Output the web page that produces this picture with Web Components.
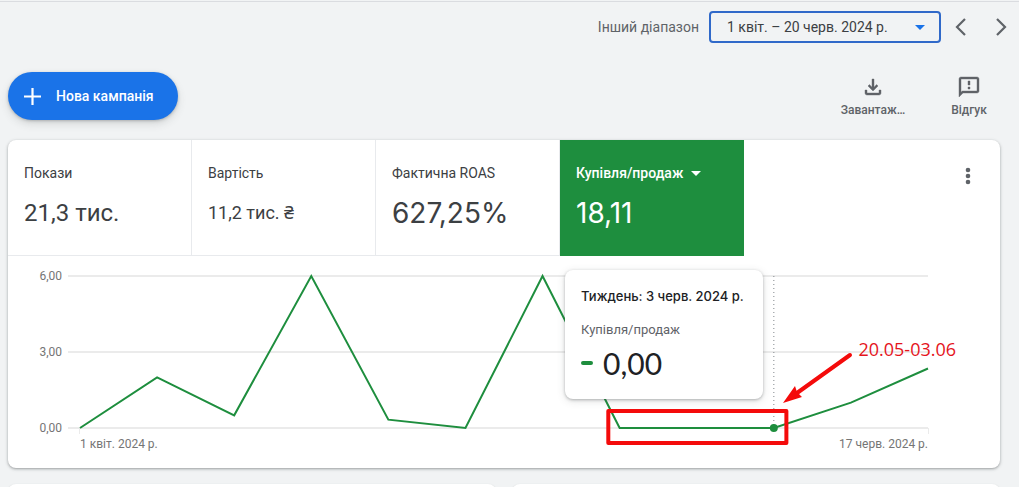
<!DOCTYPE html>
<html lang="uk">
<head>
<meta charset="utf-8">
<meta name="viewport" content="width=device-width, initial-scale=1">
<title>Огляд кампаній</title>
<style>
html{height:100%;overflow:hidden}
body{margin:0;height:100%;overflow:hidden;background:#f1f3f4;color:#3c4043;font-family:Roboto,"Noto Sans",sans-serif;font-size:14px}
</style>
</head>
<body>
<ads-overview></ads-overview>
<script>
function define(name, html, setup) {
  const template = document.createElement('template');
  template.innerHTML = html;
  customElements.define(name, class extends HTMLElement {
    constructor() {
      super();
      this.attachShadow({mode: 'open'}).append(template.content.cloneNode(true));
    }
    connectedCallback() {
      if (setup) setup(this, this.shadowRoot);
    }
  });
}

/* Date range picker with previous / next arrows */
define('date-range', `
<style>
:host{display:flex;align-items:center;justify-content:flex-end;height:32px;margin-right:-2px}
.name{color:#5f6368;line-height:20px;margin-right:10px}
button{font:inherit;color:inherit;cursor:pointer;background:none;border:0;padding:0}
.range{box-sizing:border-box;display:flex;align-items:center;justify-content:space-between;width:232px;height:32px;padding:0 14px 0 16px;border:2px solid #3069c9;border-radius:4px}
.step{display:flex;align-items:center;justify-content:center;width:40px;height:32px;color:#5f6368}
svg{display:block}
</style>
<span class="name" id="name">Інший діапазон</span>
<button class="range" aria-describedby="name"><slot></slot><svg width="10" height="5"><path d="M0 0h10L5 5z" fill="#1a73e8"/></svg></button>
<button class="step" aria-label="Попередній період"><svg width="12" height="18" fill="none" stroke="currentColor" stroke-width="2.2"><path d="M10 1 2 9l8 8"/></svg></button>
<button class="step" aria-label="Наступний період"><svg width="12" height="18" fill="none" stroke="currentColor" stroke-width="2.2"><path d="m2 1 8 8-8 8"/></svg></button>
`);

define('new-campaign', `
<style>
:host{display:block}
button{display:flex;align-items:center;gap:15px;height:48px;padding:0 24px 0 16px;border:0;border-radius:24px;background:#1a73e8;color:#fff;font:500 14px/20px Roboto,sans-serif;cursor:pointer;box-shadow:0 1px 3px rgba(60,64,67,.3),0 4px 8px rgba(60,64,67,.15)}
svg{display:block}
</style>
<button><svg width="17" height="17" aria-hidden="true"><path d="M8.5 0v17M0 8.5h17" stroke="#fff" stroke-width="2.2"/></svg><slot></slot></button>
`);

define('tool-button', `
<style>
:host{display:block}
button{display:flex;flex-direction:column;align-items:center;gap:3px;width:96px;padding:0;border:0;background:none;color:#5f6368;font:500 12px/16px Roboto,sans-serif;cursor:pointer}
::slotted(svg){display:block;width:24px;height:24px;fill:currentColor}
</style>
<button><slot name="icon"></slot><slot></slot></button>
`);

/* One metric of the scorecard */
define('metric-tile', `
<style>
:host{display:block;width:184px;border-right:1px solid #e8eaed;border-bottom:1px solid #e8eaed;box-sizing:border-box;height:116px}
:host([selected]){background:#1e8e3e;color:#fff;border-color:#1e8e3e;font-weight:500}
button{display:flex;flex-direction:column;align-items:flex-start;width:100%;height:100%;padding:23px 16px 22px;border:0;background:none;color:inherit;font:inherit;text-align:left;cursor:pointer}
.label{display:flex;align-items:center;gap:8px;line-height:20px}
.value{font-size:24px;font-weight:400;line-height:40px;margin-top:10px;white-space:nowrap}
:host([size=small]) .value{font-size:18px}
:host([size=large]) .value{font-family:Inter,sans-serif;font-size:28px}
svg{display:none}
:host([selected]) svg{display:block}
</style>
<button><span class="label"><slot name="label"></slot><svg width="10" height="5"><path d="M0 0h10L5 5z" fill="currentColor"/></svg></span><span class="value"><slot></slot></span></button>
`);

/* Card shown over the chart for the hovered week */
define('chart-tooltip', `
<style>
:host{display:block;box-sizing:border-box;width:198px;padding:16px;border-radius:8px;background:#fff;box-shadow:0 1px 3px rgba(60,64,67,.35),0 2px 8px rgba(60,64,67,.15)}
.week{color:#202124;font:500 13px/20px Inter,sans-serif;white-space:nowrap}
.metric{font-size:13px;line-height:20px;color:#5f6368;margin-top:14px}
.row{display:flex;align-items:center;gap:10px;color:#202124;font:30px/40px Lato,sans-serif;margin-top:3px}
i{width:12px;height:4px;border-radius:2px;background:#1e8e3e}
</style>
<div class="week"><slot name="week"></slot></div>
<div class="metric"><slot name="metric"></slot></div>
<div class="row"><i></i><slot></slot></div>
`);

/* Weekly line chart; horizontal places are shares of the plot width */
define('weekly-chart', `
<style>
:host{display:grid;grid-template-columns:54px 1fr;column-gap:18px;padding:20px 72px 0 0;height:192px;font-size:12px;color:#757575}
.scale{display:flex;flex-direction:column;justify-content:space-between;height:168px;margin-top:-8px;text-align:right;line-height:16px}
.plot{position:relative;height:152px}
svg{display:block;overflow:visible}
.dates{display:flex;justify-content:space-between;line-height:16px;margin-top:8px}
.tip{position:absolute;right:19.45%;top:-6px}
.note{position:absolute;left:91.8%;top:61px;color:#e5141c;font:400 18px/24px "Open Sans",sans-serif;white-space:nowrap}
.over{position:absolute;left:0;top:0}
</style>
<div class="scale"><span>6,00</span><span>3,00</span><span>0,00</span></div>
<div>
<div class="plot">
<svg width="100%" height="152">
<g fill="#ebebeb"><rect x="-12" y="-1" width="100%" height="2"/><rect x="-12" y="75" width="100%" height="2"/><rect x="-12" y="151" width="100%" height="2"/><rect x="90%" y="-1" width="10%" height="2"/><rect x="90%" y="75" width="10%" height="2"/><rect x="90%" y="151" width="10%" height="2"/><rect x="-1" y="152" width="1" height="6"/><rect x="100%" y="152" width="1" height="6"/></g>
<line x1="81.82%" x2="81.82%" y1="0" y2="152" stroke="#80868b" stroke-width="1" stroke-dasharray="1 3"/>
<svg class="series" width="100%" height="152" viewBox="0 0 11 6" preserveAspectRatio="none"><polyline fill="none" stroke="#1e8e3e" stroke-width="2" vector-effect="non-scaling-stroke"/></svg>
<circle cx="81.82%" cy="152" r="4" fill="#1e8e3e"/>
</svg>
<div class="tip"><slot name="tooltip"></slot></div>
<svg class="over" width="100%" height="152" aria-hidden="true">
<rect x="62.3%" y="135" width="21%" height="32" fill="none" stroke="#f40b0b" stroke-width="4" stroke-linejoin="round"/>
<svg x="82.9%" y="127" width="68" height="50" overflow="visible"><path d="M67-48 14-10" stroke="#f40b0b" stroke-width="4" stroke-linecap="round"/><path d="M0 0 12-17 14-11 19-6z" fill="#f40b0b"/></svg>
</svg>
<span class="note"><slot name="note"></slot></span>
</div>
<div class="dates"><slot name="from"></slot><slot name="to"></slot></div>
</div>
`, (host, root) => {
  const values = host.getAttribute('values').split(' ').map(Number);
  root.querySelector('polyline').setAttribute('points', values.map((v, i) => i + ',' + (6 - v)).join(' '));
});

define('score-card', `
<style>
:host{display:block;background:#fff;border-radius:8px;overflow:hidden;box-shadow:0 1px 2px rgba(60,64,67,.3),0 1px 3px 1px rgba(60,64,67,.15)}
.metrics{display:flex}
.menu{margin:24px 20px 0 auto;padding:0;border:0;background:none;width:24px;height:24px;color:#5f6368;cursor:pointer}
</style>
<div class="metrics"><slot name="metric"></slot><button class="menu" aria-label="Інші параметри"><svg width="24" height="24" fill="currentColor"><circle cx="12" cy="6" r="2.3"/><circle cx="12" cy="12" r="2.3"/><circle cx="12" cy="18" r="2.3"/></svg></button></div>
<slot></slot>
`);

define('plain-card', `
<style>:host{display:block;flex:1;height:48px;background:#fff;border-radius:8px;box-shadow:0 1px 2px rgba(60,64,67,.3)}</style><slot></slot>
`);

define('ads-overview', `
<style>
:host{display:block;border-top:1px solid #dadce0;margin-top:1px}
date-range{padding:9px 0 0}
.body{padding:0 19px 0 8px}
.actions{display:flex;justify-content:space-between;margin:29px -17px 20px 0}
.tools{display:flex;padding-top:3px}
.next{display:flex;gap:16px;margin-top:16px}
</style>
<date-range>1 квіт. – 20 черв. 2024 р.</date-range>
<div class="body">
<div class="actions">
<new-campaign>Нова кампанія</new-campaign>
<div class="tools">
<tool-button><svg slot="icon" viewBox="0 0 24 24"><path d="M18 15v3H6v-3H4v3c0 1.1.9 2 2 2h12c1.1 0 2-.9 2-2v-3h-2zM17 11l-1.41-1.41L13 12.17V4h-2v8.17L8.41 9.59 7 11l5 5 5-5z" stroke="currentColor" stroke-width=".4"/></svg>Завантаж…</tool-button>
<tool-button><svg slot="icon" viewBox="0 0 24 24"><path d="M20 2H4c-1.1 0-2 .9-2 2v18l4-4h14c1.1 0 2-.9 2-2V4c0-1.1-.9-2-2-2zm0 14H5.2L4 17.2V4h16v12zM11 12h2v2h-2zM11 6h2v4h-2z" stroke="currentColor" stroke-width=".4"/></svg>Відгук</tool-button>
</div>
</div>
<score-card>
<metric-tile slot="metric"><span slot="label">Покази</span>21,3 тис.</metric-tile>
<metric-tile slot="metric" size="small"><span slot="label">Вартість</span>11,2 тис. ₴</metric-tile>
<metric-tile slot="metric" size="large"><span slot="label">Фактична ROAS</span>627,25%</metric-tile>
<metric-tile slot="metric" size="large" selected><span slot="label">Купівля/продаж</span>18,11</metric-tile>
<weekly-chart values="0 2 0.5 6 0.33 0 6 0 0 0 1 2.35">
<chart-tooltip slot="tooltip"><span slot="week">Тиждень: 3 черв. 2024 р.</span><span slot="metric">Купівля/продаж</span>0,00</chart-tooltip>
<span slot="note">20.05-03.06</span>
<span slot="from">1 квіт. 2024 р.</span><span slot="to">17 черв. 2024 р.</span>
</weekly-chart>
</score-card>
<div class="next"><plain-card></plain-card><plain-card></plain-card></div>
</div>
`);
</script>
</body>
</html>
